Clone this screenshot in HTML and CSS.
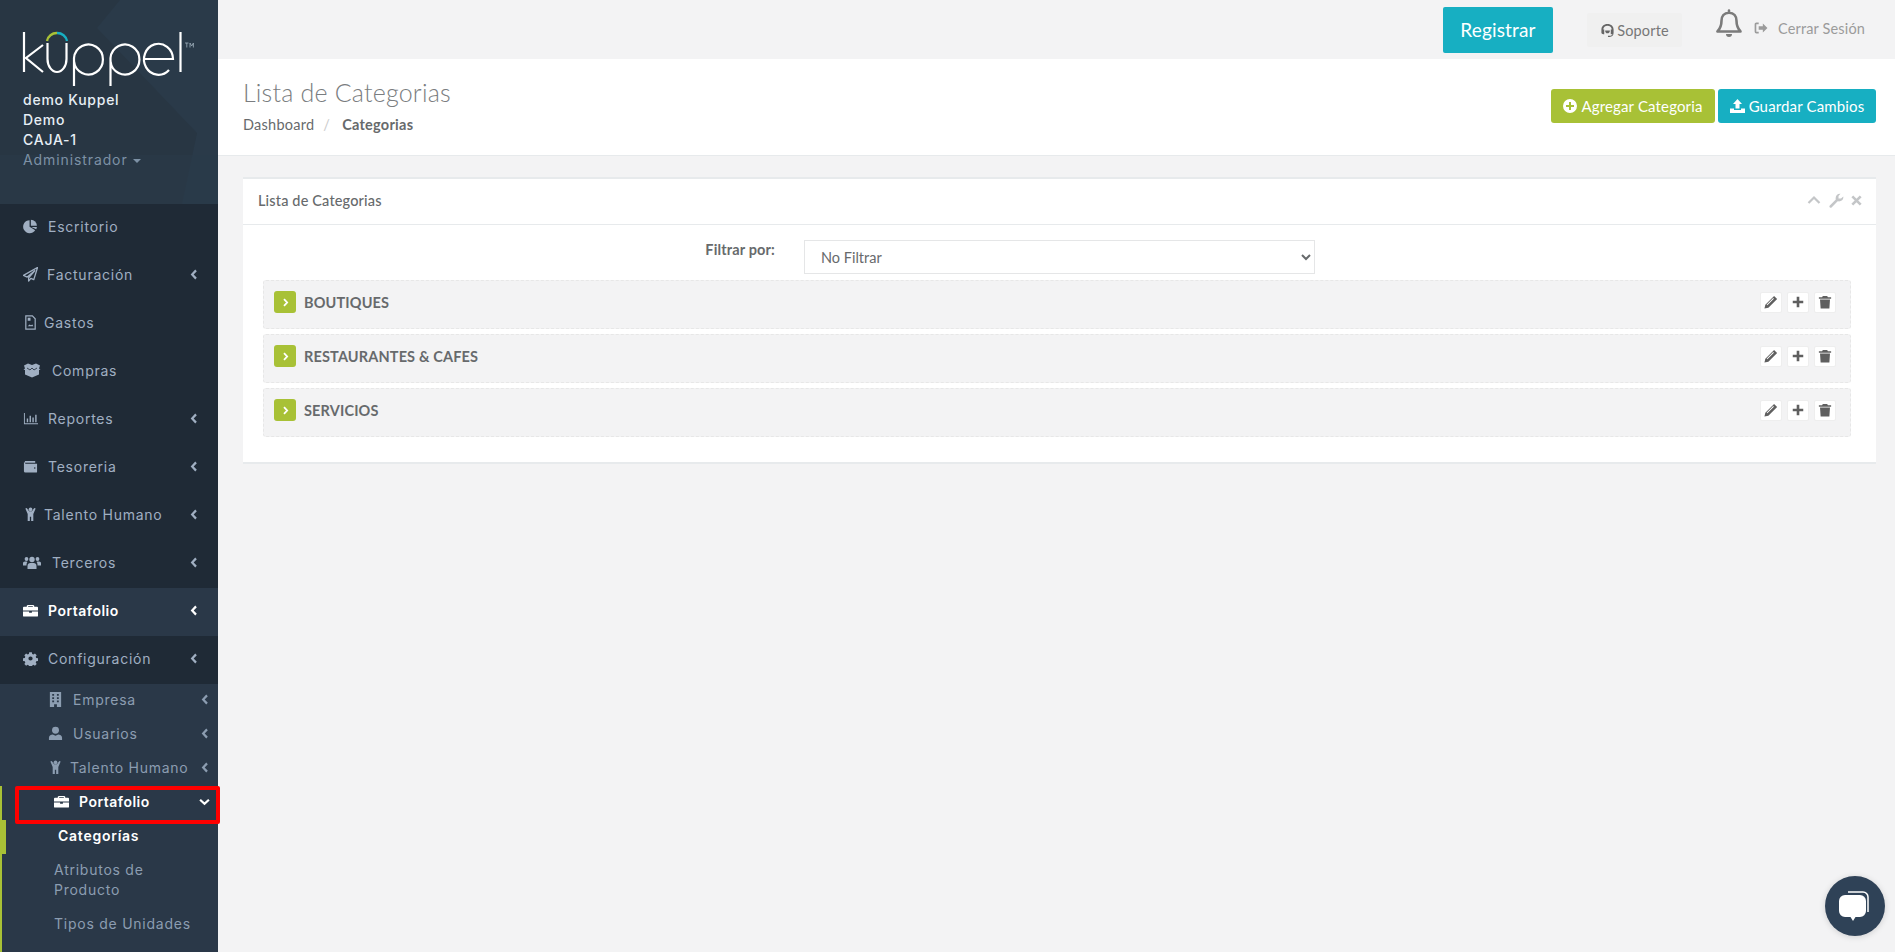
FILE: index.html
```html
<!DOCTYPE html>
<html lang="es">
<head>
<meta charset="utf-8">
<title>Lista de Categorias</title>
<link rel="stylesheet" href="styles.css">
</head>
<body>
<svg class="defs" width="0" height="0" aria-hidden="true">
  <symbol id="i-pie" viewBox="0 0 16 16"><path d="M7 1.200A7 7 0 1 0 13 12L7 8.200z"/><path d="M8.400.8v6.500h6.400A6.500 6.500 0 0 0 8.400.8z"/><path d="M8.900 8.600l5.200 2.400c.4-.8.6-1.600.7-2.400z"/></symbol>
  <symbol id="i-plane" viewBox="0 0 16 16"><path d="M15.500.5 .5 9l4 1.700L12.500 4 6 11.500V15l2.400-2.800 3.100 1.300z" fill="none" stroke="currentColor" stroke-width="1.400" stroke-linejoin="round"/></symbol>
  <symbol id="i-file" viewBox="0 0 16 16"><path d="M3 1h7l3 3v11H3z" fill="none" stroke="currentColor" stroke-width="1.300"/><path d="M5 3h3v3H5zM5 12l2-2 1.500 1L10 10l1 2z"/></symbol>
  <symbol id="i-box" viewBox="0 0 18 14"><path d="M1 2 5 0l4 1.500L13 0l4 2-1 3 1.500 1-1.500.5V11l-7 3-7-3V6.500L.5 6 2 5z"/><path d="M4 4.500l3 2 2-2 2 2 3-2" fill="none" stroke="#1f2a36" stroke-width=".8"/></symbol>
  <symbol id="i-bars" viewBox="0 0 16 16"><path d="M1 2h1v11h14v1.200H1zM4 8h1.500v4H4zM7 5h1.500v7H7zM10 7h1.500v5H10zM13 4h1.500v8H13z"/></symbol>
  <symbol id="i-wallet" viewBox="0 0 16 16"><path d="M2 2h11v2H2zM1 3.500A1.500 1.500 0 0 1 2.500 5H15v8.500a1 1 0 0 1-1 1H2.500A1.500 1.500 0 0 1 1 13z"/><circle cx="12.500" cy="9.500" r=".8" fill="#1f2a36"/></symbol>
  <symbol id="i-person" viewBox="0 0 16 16"><circle cx="8" cy="2.500" r="2"/><path d="M2.500 1.500 4 1l2.500 3.500h3L12 1l1.500.5L11 7.500V15H8.700V10.500H7.300V15H5V7.500z"/></symbol>
  <symbol id="i-users" viewBox="0 0 18 14"><circle cx="9" cy="4" r="2.700"/><circle cx="3.500" cy="3.500" r="1.900"/><circle cx="14.500" cy="3.500" r="1.900"/><path d="M4.500 13.500v-3C4.500 8 6 7.500 9 7.500s4.500.5 4.500 3v3zM0 10V7.500C0 6 1.500 6 3.500 6l1 .5C3.500 7.500 3.500 9 3.500 10zM18 10V7.500C18 6 16.500 6 14.500 6l-1 .5c1 1 1 2.500 1 3.500z"/></symbol>
  <symbol id="i-case" viewBox="0 0 16 16"><path d="M5 2h6l1 1v1h3a1 1 0 0 1 1 1v3H0V5a1 1 0 0 1 1-1h3V3zM5.500 3.200V4h5v-.8zM0 9h6.500v1.500h3V9H16v4.500a1 1 0 0 1-1 1H1a1 1 0 0 1-1-1z"/></symbol>
  <symbol id="i-gear" viewBox="0 0 16 16"><path fill-rule="evenodd" d="M6.500 1h3l.4 2 1.400.6 1.700-1.100 2 2-1.100 1.700.6 1.400 2 .4v3l-2 .4-.6 1.400 1.100 1.700-2 2-1.700-1.100-1.400.6-.4 2h-3l-.4-2-1.400-.6-1.700 1.100-2-2 1.100-1.700-.6-1.400-2-.4v-3l2-.4.6-1.400-1.100-1.700 2-2 1.700 1.100 1.400-.6zM8 5.800a2.400 2.400 0 1 0 0 4.800 2.400 2.400 0 0 0 0-4.800z" transform="translate(.5 .3) scale(.94)"/></symbol>
  <symbol id="i-building" viewBox="0 0 14 16"><path fill-rule="evenodd" d="M1 0h12v16H8.500v-3h-3v3H1zM3.500 2v2h2V2zm5 0v2h2V2zm-5 3.500v2h2v-2zm5 0v2h2v-2zm-5 3.500v2h2V9zm5 0v2h2V9z"/></symbol>
  <symbol id="i-user" viewBox="0 0 16 16"><circle cx="8" cy="4.500" r="3.700"/><path d="M1 15v-2.500C1 10 3.500 9 5 9l3 1.500L11 9c1.500 0 4 1 4 3.500V15z"/></symbol>
  <symbol id="i-left" viewBox="0 0 8 12"><path d="M6.200 1.500 2 6l4.200 4.500" fill="none" stroke="currentColor" stroke-width="2.400"/></symbol>
  <symbol id="i-down" viewBox="0 0 12 8"><path d="M1.200 1.500 6 6l4.800-4.500" fill="none" stroke="currentColor" stroke-width="2.400"/></symbol>
  <symbol id="i-right" viewBox="0 0 8 12"><path d="M2 1.500 6.200 6 2 10.500" fill="none" stroke="currentColor" stroke-width="2.400"/></symbol>
  <symbol id="i-pencil" viewBox="0 0 16 16"><path d="M11.500 1 15 4.500 5 14.500l-4.500 1L1.500 11zM10.500 3.500 3 11l.8.800L11.300 4.300z"/></symbol>
  <symbol id="i-plus" viewBox="0 0 16 16"><path d="M6.500 2h3v4.500H14v3H9.500V14h-3V9.500H2v-3h4.500z"/></symbol>
  <symbol id="i-trash" viewBox="0 0 16 16"><path d="M5.500 1h5l.8 1.500H15v1.800H1V2.500h3.700zM2.300 5.200h11.400L13 15.500H3z"/></symbol>
</svg>

<div class="app">
  <aside class="sidebar">
    <div class="profile">
      <svg class="poly" viewBox="0 0 218 204" aria-hidden="true"><path d="M0 0h120L97 28l100 105-15 71H0z" fill="#283643"/><path d="M0 155h218v49H0z" fill="#2a3a49" opacity=".6"/></svg>
      <svg class="logo" viewBox="0 0 176 60" role="img" aria-label="kuppel logo">
        <g fill="none" stroke="#fff" stroke-width="2.200">
          <path d="M1 0v40M20 13 3 26l17 14"/>
          <path d="M24.500 11v16a9.500 13 0 0 0 19 0V11"/>
          <path d="M51 54V26a14.500 15 0 1 1 0 3"/>
          <path d="M87.500 54V26a14.500 15 0 1 1 0 3"/>
          <path d="M121 27h29a14.500 15.500 0 1 0-4 11"/>
          <path d="M157.500 0v40"/>
        </g>
        <path d="M24 9a10 9.500 0 0 1 10-8" fill="none" stroke="#a8c136" stroke-width="2.400"/>
        <path d="M34 1a10 9.500 0 0 1 10 8" fill="none" stroke="#17afc2" stroke-width="2.400"/>
        <path d="M162 11h3.500M163.800 11v4.500M167 15.500V11l1.700 3 1.700-3v4.500" fill="none" stroke="#9fb0bd" stroke-width=".8"/>
      </svg>
      <div class="who">demo Kuppel</div>
      <div class="who">Demo</div>
      <div class="who">CAJA-1</div>
      <div class="role">Administrador <span class="caret"></span></div>
    </div>
    <nav class="menu">
      <a class="item"><svg class="ic"><use href="#i-pie"/></svg><span class="g9">Escritorio</span></a>
      <a class="item"><svg class="ic"><use href="#i-plane"/></svg><span class="g8">Facturación</span><svg class="chev"><use href="#i-left"/></svg></a>
      <a class="item"><svg class="ic"><use href="#i-file"/></svg><span class="g6">Gastos</span></a>
      <a class="item"><svg class="ic wide"><use href="#i-box"/></svg><span class="g10">Compras</span></a>
      <a class="item"><svg class="ic"><use href="#i-bars"/></svg><span class="g9">Reportes</span><svg class="chev"><use href="#i-left"/></svg></a>
      <a class="item"><svg class="ic"><use href="#i-wallet"/></svg><span class="g9">Tesoreria</span><svg class="chev"><use href="#i-left"/></svg></a>
      <a class="item"><svg class="ic"><use href="#i-person"/></svg><span class="g6">Talento Humano</span><svg class="chev"><use href="#i-left"/></svg></a>
      <a class="item"><svg class="ic wide"><use href="#i-users"/></svg><span class="g10">Terceros</span><svg class="chev"><use href="#i-left"/></svg></a>
      <a class="item active"><svg class="ic"><use href="#i-case"/></svg><span class="g9">Portafolio</span><svg class="chev"><use href="#i-left"/></svg></a>
      <a class="item"><svg class="ic"><use href="#i-gear"/></svg><span class="g9">Configuración</span><svg class="chev"><use href="#i-left"/></svg></a>
      <div class="sub">
        <a class="sub-item"><svg class="ic"><use href="#i-building"/></svg><span class="g9">Empresa</span><svg class="chev"><use href="#i-left"/></svg></a>
        <a class="sub-item"><svg class="ic"><use href="#i-user"/></svg><span class="g9">Usuarios</span><svg class="chev"><use href="#i-left"/></svg></a>
        <a class="sub-item"><svg class="ic"><use href="#i-person"/></svg><span class="g7">Talento Humano</span><svg class="chev"><use href="#i-left"/></svg></a>
        <div class="subtree">
          <a class="sub-item open"><svg class="ic white"><use href="#i-case"/></svg><span class="g9">Portafolio</span><svg class="chev wide"><use href="#i-down"/></svg><span class="redbox"></span></a>
          <a class="leaf current">Categorías</a>
          <a class="leaf two">Atributos de Producto</a>
          <a class="leaf">Tipos de Unidades</a>
        </div>
      </div>
    </nav>
  </aside>

  <main class="main">
    <header class="topbar">
      <a class="register">Registrar</a>
      <a class="support">
        <svg class="sup-ic" viewBox="0 0 16 16" aria-hidden="true"><path d="M8 1C4 1 1.500 3.500 1.500 7v3.500C1.500 11.500 2.500 12 3.500 12h1V7h-1C3.500 4.500 5.500 2.800 8 2.800s4.500 1.700 4.500 4.200h-1v5h1c.3 0 .6 0 .8-.1-.4 1-1.300 1.600-3 1.600H8.500v1.300h1.800c2.700 0 4.200-1.600 4.200-4.300V7C14.500 3.500 12 1 8 1z"/><path d="M5.500 8a2.500 3 0 0 0 5 0z"/></svg>
        Soporte
      </a>
      <svg class="bell" viewBox="0 0 26 29" aria-hidden="true"><path d="M13 1.500v2.300M13 3.800c-5 0-7.500 3.500-7.500 8 0 5.500-1.500 8-4 10.700h23c-2.500-2.700-4-5.200-4-10.700 0-4.500-2.500-8-7.500-8z" fill="none" stroke="#7b7b7b" stroke-width="2.600" stroke-linejoin="round" stroke-linecap="round"/><path d="M10 25h6a3 3 0 0 1-6 0z" fill="#7b7b7b"/></svg>
      <a class="logout">
        <svg class="out-ic" viewBox="0 0 15 13" aria-hidden="true"><path d="M5 1.500H2.500a1 1 0 0 0-1 1v8a1 1 0 0 0 1 1H5" fill="none" stroke="currentColor" stroke-width="1.800"/><path d="M9.500 1.500 14.500 6.500 9.500 11.500V8.500H5v-4h4.500z"/></svg>
        Cerrar Sesión
      </a>
    </header>

    <section class="heading">
      <div class="titles">
        <h1>Lista de Categorias</h1>
        <div class="crumbs"><span>Dashboard</span><span class="sep">/</span><strong>Categorias</strong></div>
      </div>
      <div class="actions">
        <a class="btn green">
          <svg class="btn-ic" viewBox="0 0 14 14" aria-hidden="true"><path fill-rule="evenodd" d="M7 0a7 7 0 1 1 0 14A7 7 0 0 1 7 0zM6 3v3H3v2h3v3h2V8h3V6H8V3z"/></svg>
          Agregar Categoria
        </a>
        <a class="btn teal">
          <svg class="btn-ic up" viewBox="0 0 15 14" aria-hidden="true"><path d="M7.500 0 12 5H9.500v4.500h-4V5H3zM0 9.500h4V11h7V9.500h4V14H0z"/></svg>
          Guardar Cambios
        </a>
      </div>
    </section>

    <section class="content">
      <div class="panel">
        <div class="panel-head">
          <h2>Lista de Categorias</h2>
          <div class="tools">
            <svg class="t-up" viewBox="0 0 14 9" aria-hidden="true"><path d="M1.500 7.500 7 2l5.500 5.500" fill="none" stroke="currentColor" stroke-width="2.200"/></svg>
            <svg class="t-wr" viewBox="0 0 15 15" aria-hidden="true"><path d="M.8 12.500 6.800 6.500C6 3.500 8 .5 11.500.8L9.500 3v2.500H12L14.300 3.500C14.800 7 12 9 8.700 8.300L2.800 14.300a1.200 1.200 0 0 1-2-1.800z"/></svg>
            <svg class="t-x" viewBox="0 0 11 11" aria-hidden="true"><path d="M1.300 1.300l8.400 8.400M9.700 1.300 1.300 9.700" fill="none" stroke="currentColor" stroke-width="2.600"/></svg>
          </div>
        </div>
        <div class="panel-body">
          <div class="filter">
            <label class="filter-label" for="filtro">Filtrar por:</label>
            <select class="filter-select" id="filtro"><option>No Filtrar</option></select>
          </div>
          <div class="cat">
            <span class="toggle"><svg><use href="#i-right"/></svg></span>
            <span class="cat-name">BOUTIQUES</span>
            <span class="cat-actions">
              <a class="act"><svg><use href="#i-pencil"/></svg></a><a class="act"><svg><use href="#i-plus"/></svg></a><a class="act"><svg><use href="#i-trash"/></svg></a>
            </span>
          </div>
          <div class="cat">
            <span class="toggle"><svg><use href="#i-right"/></svg></span>
            <span class="cat-name">RESTAURANTES &amp; CAFES</span>
            <span class="cat-actions">
              <a class="act"><svg><use href="#i-pencil"/></svg></a><a class="act"><svg><use href="#i-plus"/></svg></a><a class="act"><svg><use href="#i-trash"/></svg></a>
            </span>
          </div>
          <div class="cat">
            <span class="toggle"><svg><use href="#i-right"/></svg></span>
            <span class="cat-name">SERVICIOS</span>
            <span class="cat-actions">
              <a class="act"><svg><use href="#i-pencil"/></svg></a><a class="act"><svg><use href="#i-plus"/></svg></a><a class="act"><svg><use href="#i-trash"/></svg></a>
            </span>
          </div>
        </div>
      </div>
    </section>
  </main>
</div>

<a class="chat" aria-label="Chat">
  <svg viewBox="0 0 32 32" aria-hidden="true"><path d="M9 2h15a5 5 0 0 1 5 5v15" fill="none" stroke="#fff" stroke-width="1.500"/><path d="M6 5h15a6 6 0 0 1 6 6v10a6 6 0 0 1-6 6h-4.500L14 31l-2.500-4H6a6 6 0 0 1-6-6V11a6 6 0 0 1 6-6z" fill="#fff"/></svg>
</a>
</body>
</html>
```

FILE: styles.css
```css
* { box-sizing: border-box; }
html, body { margin: 0; height: 100%; overflow: hidden; }
body { font-family: Lato, "Open Sans", sans-serif; font-size: 14.5px; letter-spacing: .15px; color: #676a6c; background: #f3f3f4; }
a { color: inherit; text-decoration: none; }
.defs { position: absolute; }

.app { display: flex; height: 952px; }
.sidebar { position: relative; z-index: 1; width: 218px; flex: none; height: 952px; background: #1f2a36; font-family: "Inter", "DejaVu Sans", sans-serif; letter-spacing: .75px; }

.profile { position: relative; height: 204px; padding: 32px 0 0 23px; background: #2a3a49; }
.poly { position: absolute; left: 0; top: 0; width: 218px; height: 204px; }
.logo { position: relative; display: block; width: 176px; height: 60px; margin-bottom: -2px; overflow: visible; }
.who { position: relative; font-size: 14px; line-height: 20px; color: #e6eef5; font-weight: 500; }
.role { position: relative; font-size: 14px; line-height: 20px; color: #7d91a5; letter-spacing: .9px; }
.caret { display: inline-block; margin-left: 1px; vertical-align: middle; border: 4px solid transparent; border-top-color: #7d91a5; border-bottom: 0; }

.item { display: flex; align-items: center; height: 48px; padding: 0 0 3px 23px; color: #a0afc2; font-size: 14px; }
.item.active { background: #2a3848; color: #fff; font-weight: 600; letter-spacing: .5px; }
.ic { width: 15px; height: 15px; flex: none; fill: currentColor; }
.ic.wide { width: 18px; }
.chev { width: 8px; height: 11px; margin-left: auto; margin-right: 20px; flex: none; }
.g6 { margin-left: 6px; } .g7 { margin-left: 7px; } .g8 { margin-left: 9px; } .g9 { margin-left: 10px; } .g10 { margin-left: 11px; }

.sub { height: 268px; background: #2a3848; }
.sub-item { position: relative; display: flex; align-items: center; height: 34px; padding: 0 0 3px 48px; color: #8c9db1; font-size: 14px; white-space: nowrap; }
.sub-item .chev { margin-right: 9px; }
.subtree { height: 166px; border-left: 2px solid #a8c136; }
.sub-item.open { color: #fff; font-weight: 600; padding-left: 52px; letter-spacing: .5px; }
.ic.white { color: #fff; }
.sub-item .chev.wide { width: 11px; height: 8px; margin-right: 8px; }
.redbox { position: absolute; left: 13px; top: 0; width: 205px; height: 38px; border: 4px solid #f00; border-radius: 2px; pointer-events: none; }
.leaf { display: block; padding-left: 52px; height: 34px; line-height: 31px; color: #8c9db1; font-size: 14px; }
.leaf.current { margin-left: -2px; color: #fff; font-weight: 600; border-left: 6px solid #a8c136; padding-left: 52px; }
.leaf.two { height: 54px; line-height: 20px; padding: 6px 40px 0 52px; }

.main { flex: 1; min-width: 0; display: flex; flex-direction: column; }
.topbar { height: 59px; flex: none; display: flex; align-items: flex-start; padding-right: 29px; justify-content: flex-end; }
.register { width: 110px; height: 46px; margin-top: 7px; border-radius: 2px; background: #17afc2; color: #fff; font-size: 19px; line-height: 46px; text-align: center; }
.support { display: flex; align-items: center; justify-content: center; gap: 2px; width: 95px; height: 34px; margin: 13px 0 0 34px; background: #f0f0f0; border-radius: 2px; color: #777; }
.sup-ic { width: 15px; height: 15px; fill: #666; }
.bell { width: 26px; height: 29px; margin: 9px 0 0 34px; }
.logout { display: flex; align-items: center; gap: 10px; width: 112px; height: 20px; margin: 18px 0 0 12px; color: #9b9b9b; white-space: nowrap; }
.out-ic { width: 14px; height: 12px; flex: none; fill: currentColor; }

.heading { height: 97px; flex: none; display: flex; justify-content: space-between; background: #fff; border-bottom: 1px solid #e7eaec; padding: 0 19px 0 25px; }
.titles h1 { margin: 19px 0 0; font-size: 25px; font-weight: 300; line-height: 29px; letter-spacing: .2px; color: #7a7d80; }
.crumbs { display: flex; gap: 9px; margin-top: 9px; line-height: 18px; letter-spacing: .25px; }
.crumbs .sep { color: #ccc; }
.crumbs strong { margin-left: 3px; font-weight: 700; }
.actions { display: flex; gap: 3px; margin-top: 30px; height: 34px; }
.btn { display: flex; align-items: center; justify-content: center; gap: 4px; height: 34px; border-radius: 3px; color: #fff; font-size: 15px; }
.btn.green { width: 164px; background: #a8c136; }
.btn.teal { width: 158px; background: #17afc2; }
.btn-ic { width: 14px; height: 14px; flex: none; fill: #fff; }
.btn-ic.up { width: 15px; }

.content { flex: 1; padding: 21px 19px 0 25px; }
.panel { background: #fff; border-top: 2px solid #e7eaec; height: 287px; border-bottom: 2px solid #e7eaec; }
.panel-head { display: flex; justify-content: space-between; align-items: center; height: 46px; padding: 0 14px 3px 15px; border-bottom: 1px solid #e7eaec; }
.panel-head h2 { margin: 0; font-size: 14.5px; font-weight: 500; color: #676a6c; }
.tools { display: flex; align-items: center; gap: 7px; color: #c4c6c8; }
.t-up { width: 14px; height: 10px; margin-right: 1px; }
.t-wr { width: 15px; height: 15px; fill: currentColor; }
.t-x { width: 11px; height: 11px; }
.panel-body { padding: 15px 25px 0 20px; }
.filter { display: flex; height: 34px; margin-bottom: 6px; }
.filter-label { width: 512px; padding-top: 1px; text-align: right; font-weight: 700; line-height: 18px; color: #676a6c; }
.filter-select { width: 511px; height: 34px; margin-left: 29px; padding: 0 12px; background: #fff; border: 1px solid #e5e6e7; color: #676a6c; font-family: Lato, sans-serif; font-size: 14.5px; border-radius: 0; }
.cat { display: flex; align-items: center; height: 49px; margin-bottom: 5px; padding: 0 14px 5px 10px; background: #f3f3f4; border: 1px dashed #e7e7e7; border-radius: 3px; }
.toggle { display: flex; align-items: center; justify-content: center; width: 22px; height: 22px; background: #a8c136; color: #fff; border-radius: 3px; }
.toggle svg { width: 7px; height: 9px; }
.cat-name { margin-left: 8px; font-weight: 700; color: #676a6c; }
.cat-actions { display: flex; gap: 5px; margin-left: auto; }
.act { display: flex; align-items: center; justify-content: center; width: 22px; height: 21px; background: #fff; border: 1px solid #eee; border-radius: 2px; }
.act svg { width: 14px; height: 14px; fill: #5f5f5f; }

.chat { position: fixed; left: 1825px; top: 876px; width: 60px; height: 60px; border-radius: 50%; background: #2f4257; display: flex; align-items: center; justify-content: center; box-shadow: 0 1px 6px rgba(0,0,0,.15); }
.chat svg { width: 32px; height: 32px; }
```
